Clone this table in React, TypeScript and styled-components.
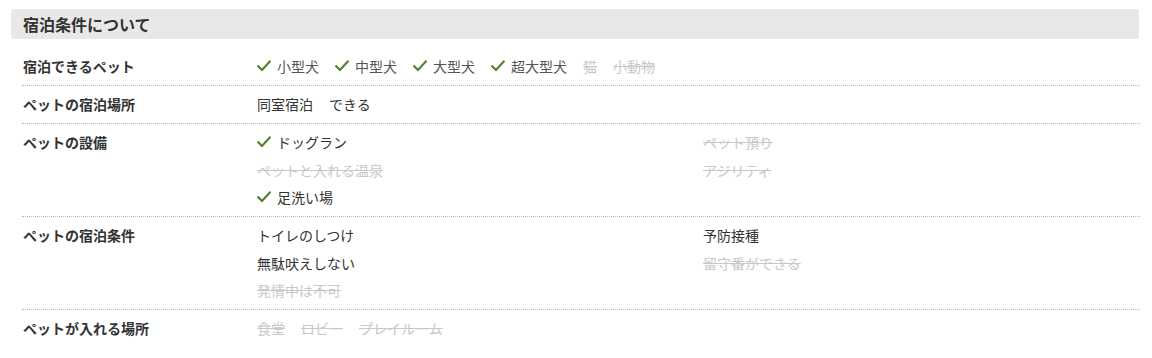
import styled, { createGlobalStyle } from 'styled-components';

const GlobalStyle = createGlobalStyle`
    html, body {
        margin: 0;
        padding: 0;
        background: #fff;
    }
    body {
        font-family: "Noto Sans CJK JP", "Noto Sans", sans-serif;
        color: #333;
    }
`;

interface Item {
    text: string;
    ok: boolean;
    check?: boolean;
}

interface Condition {
    label: string;
    layout: 'inline' | 'grid';
    tone?: 'soft' | 'dark';
    items: Item[];
}

const conditions: Condition[] = [
    {
        label: '宿泊できるペット',
        layout: 'inline',
        tone: 'soft',
        items: [
            { text: '小型犬', ok: true, check: true },
            { text: '中型犬', ok: true, check: true },
            { text: '大型犬', ok: true, check: true },
            { text: '超大型犬', ok: true, check: true },
            { text: '猫', ok: false },
            { text: '小動物', ok: false },
        ],
    },
    {
        label: 'ペットの宿泊場所',
        layout: 'inline',
        items: [
            { text: '同室宿泊', ok: true },
            { text: 'できる', ok: true },
        ],
    },
    {
        label: 'ペットの設備',
        layout: 'grid',
        items: [
            { text: 'ドッグラン', ok: true, check: true },
            { text: 'ペット預り', ok: false },
            { text: 'ペットと入れる温泉', ok: false },
            { text: 'アジリティ', ok: false },
            { text: '足洗い場', ok: true, check: true },
        ],
    },
    {
        label: 'ペットの宿泊条件',
        layout: 'grid',
        items: [
            { text: 'トイレのしつけ', ok: true },
            { text: '予防接種', ok: true },
            { text: '無駄吠えしない', ok: true },
            { text: '留守番ができる', ok: false },
            { text: '発情中は不可', ok: false },
        ],
    },
    {
        label: 'ペットが入れる場所',
        layout: 'inline',
        items: [
            { text: '食堂', ok: false },
            { text: 'ロビー', ok: false },
            { text: 'プレイルーム', ok: false },
        ],
    },
];

const Page = styled.div`
    width: 1129px;
    padding: 9px 0 0 11px;
`;

const Heading = styled.h2`
    margin: 0 1px 9px 0;
    height: 30px;
    padding: 0 12px;
    background: #e8e8e8;
    border-radius: 3px;
    font-size: 16px;
    font-weight: bold;
    line-height: 30px;
    color: #333;
`;

const Table = styled.dl`
    margin: 0 0 0 11px;
`;

const Row = styled.div`
    display: flex;
    padding: 8px 0 9px;
    border-bottom: 1px dotted #bbb;

    &:last-child {
        border-bottom: none;
    }
`;

const Label = styled.dt`
    flex: 0 0 234px;
    padding-left: 1px;
    font-size: 14px;
    font-weight: bold;
    line-height: 20px;
    color: #333;
`;

const Values = styled.dd<{ $layout: 'inline' | 'grid' }>`
    flex: 1;
    margin: 0;
    display: ${p => (p.$layout === 'grid' ? 'grid' : 'flex')};
    grid-template-columns: 446px 1fr;
    row-gap: 7.5px;
    column-gap: ${p => (p.$layout === 'grid' ? '0' : '16px')};
`;

const Value = styled.span<{ $ok: boolean; $tone?: 'soft' | 'dark' }>`
    display: inline-flex;
    align-items: center;
    font-size: 14px;
    line-height: 20px;
    color: ${p => (!p.$ok ? '#c8c8c8' : p.$tone === 'soft' ? '#555' : '#333')};
    text-decoration: ${p => (p.$ok ? 'none' : 'line-through')};
    white-space: nowrap;
`;

const Check = styled.svg`
    width: 14px;
    height: 12px;
    margin-right: 6px;
    flex: 0 0 auto;
`;

const CheckMark = () => (
    <Check viewBox="0 0 14 12">
        <path d="M1.2 6.2 L5 10 L12.8 1.6" fill="none" stroke="#4f7f2b" strokeWidth="2.1" strokeLinecap="square" />
    </Check>
);

export default function App() {
    return (
        <Page>
            <GlobalStyle />
            <Heading>宿泊条件について</Heading>
            <Table>
                {conditions.map(c => (
                    <Row key={c.label}>
                        <Label>{c.label}</Label>
                        <Values $layout={c.layout}>
                            {c.items.map(item => (
                                <Value key={item.text} $ok={item.ok} $tone={c.tone}>
                                    {item.check && <CheckMark />}
                                    {item.text}
                                </Value>
                            ))}
                        </Values>
                    </Row>
                ))}
            </Table>
        </Page>
    );
}
